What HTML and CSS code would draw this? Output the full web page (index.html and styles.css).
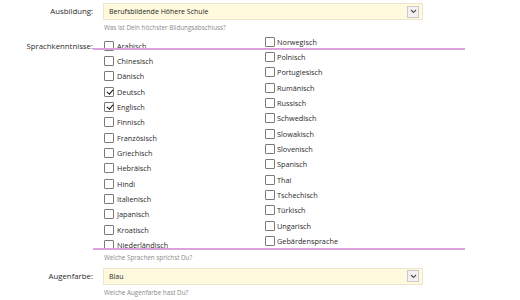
FILE: index.html
```html
<!DOCTYPE html>
<html>
<head>
<meta charset="utf-8">
<link rel="stylesheet" href="styles.css">
</head>
<body>
<div class="form">
  <div class="row">
    <div class="label sel-label">Ausbildung:</div>
    <div class="field">
      <div class="select"><span>Berufsbildende Höhere Schule</span><span class="arrow"><svg width="7" height="5" viewBox="0 0 7 5"><path d="M1 1 L3.5 3.5 L6 1" fill="none" stroke="#555" stroke-width="1.2"/></svg></span></div>
      <div class="hint">Was ist Dein höchster Bildungsabschluss?</div>
    </div>
  </div>

  <div class="row langs">
    <div class="label lang-label">Sprachkenntnisse:</div>
    <div class="field">
      <div class="cols">
        <ul class="col col1">
          <li><span class="box"></span>Arabisch</li>
          <li><span class="box"></span>Chinesisch</li>
          <li><span class="box"></span>Dänisch</li>
          <li><span class="box checked"></span>Deutsch</li>
          <li><span class="box checked"></span>Englisch</li>
          <li><span class="box"></span>Finnisch</li>
          <li><span class="box"></span>Französisch</li>
          <li><span class="box"></span>Griechisch</li>
          <li><span class="box"></span>Hebräisch</li>
          <li><span class="box"></span>Hindi</li>
          <li><span class="box"></span>Italienisch</li>
          <li><span class="box"></span>Japanisch</li>
          <li><span class="box"></span>Kroatisch</li>
          <li><span class="box"></span>Niederländisch</li>
        </ul>
        <ul class="col col2">
          <li><span class="box"></span>Norwegisch</li>
          <li><span class="box"></span>Polnisch</li>
          <li><span class="box"></span>Portugiesisch</li>
          <li><span class="box"></span>Rumänisch</li>
          <li><span class="box"></span>Russisch</li>
          <li><span class="box"></span>Schwedisch</li>
          <li><span class="box"></span>Slowakisch</li>
          <li><span class="box"></span>Slovenisch</li>
          <li><span class="box"></span>Spanisch</li>
          <li><span class="box"></span>Thai</li>
          <li><span class="box"></span>Tschechisch</li>
          <li><span class="box"></span>Türkisch</li>
          <li><span class="box"></span>Ungarisch</li>
          <li><span class="box"></span>Gebärdensprache</li>
        </ul>
      </div>
      <div class="hint">Welche Sprachen sprichst Du?</div>
    </div>
    <div class="mark mark-top"></div>
    <div class="mark mark-bottom"></div>
  </div>

  <div class="row">
    <div class="label sel-label">Augenfarbe:</div>
    <div class="field">
      <div class="select"><span>Blau</span><span class="arrow"><svg width="7" height="5" viewBox="0 0 7 5"><path d="M1 1 L3.5 3.5 L6 1" fill="none" stroke="#555" stroke-width="1.2"/></svg></span></div>
      <div class="hint">Welche Augenfarbe hast Du?</div>
    </div>
  </div>
</div>
</body>
</html>
```

FILE: styles.css
```css
html, body {
  margin: 0;
  padding: 0;
  background: #ffffff;
}
body {
  font-family: "Open Sans", "DejaVu Sans", sans-serif;
  color: #2a2a2a;
  font-size: 7.5px;
}
.form {
  padding-top: 3px;
}
.row {
  display: grid;
  grid-template-columns: 103px 320px;
  position: relative;
}
.label {
  text-align: right;
  padding-right: 10px;
  font-size: 7.8px;
  color: #2a2a2a;
}
.sel-label {
  line-height: 17px;
}
.lang-label {
  padding-top: 6px;
  line-height: 12px;
}
.select {
  height: 15px;
  border: 1px solid #ece6cf;
  background: #fff9de;
  display: flex;
  align-items: center;
  justify-content: space-between;
  padding: 0 3px 0 5px;
  font-size: 7px;
  color: #1e1e1e;
}
.arrow {
  width: 10px;
  height: 10px;
  border: 1px solid #c9c9c9;
  background: #f2f2f2;
  display: flex;
  align-items: center;
  justify-content: center;
}
.hint {
  font-size: 6.3px;
  color: #8a8a8a;
  padding: 2px 0 0 1px;
  height: 12px;
  line-height: 12px;
}
.langs .hint {
  padding-top: 0;
  height: 10px;
  line-height: 10px;
  margin-bottom: 5px;
}
.cols {
  display: grid;
  grid-template-columns: 162px 160px;
}
.col {
  list-style: none;
  margin: 0;
  padding: 0;
}
.col1 {
  padding-top: 4px;
}
.col li {
  display: flex;
  align-items: center;
  height: 15.35px;
  font-size: 7.3px;
  color: #2a2a2a;
}
.box {
  width: 8px;
  height: 8px;
  border: 1px solid #7a7a7a;
  border-radius: 1px;
  margin: 0 3px 0 1px;
  position: relative;
  background: #fff;
  flex: none;
}
.col2 .box {
  margin-left: 0;
  margin-right: 2px;
}
.box.checked::after {
  content: "";
  position: absolute;
  top: 0;
  left: 2.5px;
  width: 2.5px;
  height: 5px;
  border: solid #111;
  border-width: 0 1.5px 1.5px 0;
  transform: rotate(40deg);
}
.mark {
  position: absolute;
  left: 93px;
  width: 372px;
  height: 2px;
  background: #dba3dd;
}
.mark-top {
  top: 14px;
}
.mark-bottom {
  top: 214px;
}
```
